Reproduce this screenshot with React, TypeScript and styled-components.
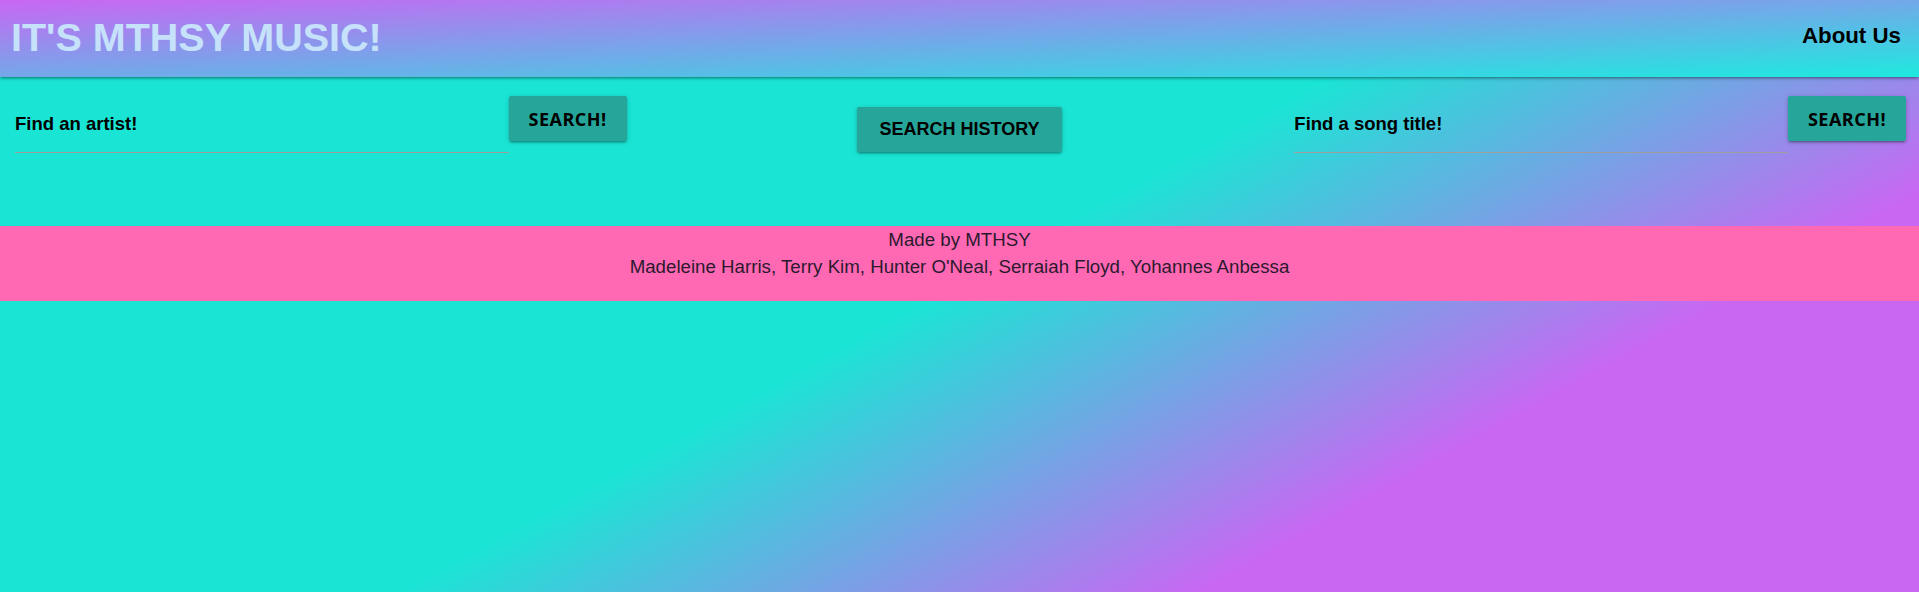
import * as React from 'react';
import styled, { createGlobalStyle } from 'styled-components';

const colors = {
    teal: '#1ae5d5',
    purple: '#c967f3',
    button: '#26a69a',
    footer: '#ff69b4',
    title: '#c6e2fb',
};

const depth1 =
    '0 2px 2px 0 rgba(0,0,0,0.14), 0 3px 1px -2px rgba(0,0,0,0.12), 0 1px 5px 0 rgba(0,0,0,0.2)';

const GlobalStyle = createGlobalStyle`
    html, body {
        margin: 0;
        padding: 0;
    }
    body {
        font-family: "Liberation Sans", Arial, sans-serif;
    }
    * {
        box-sizing: border-box;
    }
`;

const Page = styled.div`
    min-height: 100vh;
    background: linear-gradient(151deg, ${colors.teal} 49%, ${colors.purple} 76%);
`;

const Nav = styled.nav`
    position: relative;
    z-index: 1;
    height: 77px;
    display: flex;
    align-items: center;
    justify-content: space-between;
    padding: 0 18px 0 11px;
    background: linear-gradient(to bottom right, ${colors.purple}, #1ee9df);
    box-shadow: ${depth1};
`;

const Brand = styled.a`
    font-size: 39.5px;
    font-weight: bold;
    color: ${colors.title};
    text-decoration: none;
    margin-bottom: 3px;
`;

const NavLink = styled.a`
    font-size: 22.3px;
    font-weight: bold;
    color: #000;
    text-decoration: none;
    margin-bottom: 6px;
`;

const SearchRow = styled.main`
    display: grid;
    grid-template-columns: 1fr 1fr 1fr;
    height: 149px;
`;

const SearchCol = styled.div<{ $center?: boolean }>`
    display: flex;
    align-items: flex-start;
    justify-content: ${p => (p.$center ? 'center' : 'flex-start')};
    padding: ${p => (p.$center ? '30px 0 0' : '19px 13px 0 15px')};
`;

const SearchInput = styled.input`
    flex: 1;
    min-width: 0;
    height: 57px;
    padding: 0;
    border: 0;
    border-bottom: 1px solid #9e9e9e;
    background: transparent;
    outline: none;
    font-family: "Liberation Sans", Arial, sans-serif;
    font-size: 18.5px;
    font-weight: bold;
    color: #000;

    &::placeholder {
        color: #000;
        opacity: 1;
    }
`;

const Button = styled.button<{ $wide?: boolean }>`
    flex: 0 0 auto;
    width: ${p => (p.$wide ? '205px' : '118px')};
    height: 45px;
    border: 0;
    border-radius: 2px;
    background-color: ${colors.button};
    box-shadow: ${depth1};
    color: #000;
    font-family: ${p => (p.$wide ? '"Liberation Sans", Arial, sans-serif' : '"Open Sans", sans-serif')};
    font-size: 18px;
    font-weight: bold;
    letter-spacing: ${p => (p.$wide ? '0' : '0.5px')};
    text-transform: uppercase;
    cursor: pointer;
    padding: 0;
`;

const Footer = styled.footer`
    background-color: ${colors.footer};
    padding: 0 0 21px;
    text-align: center;
    font-size: 18.7px;
    line-height: 27px;
    color: #2b1a2e;
`;

const FooterLine = styled.div``;

export default function App() {
    return (
        <>
            <GlobalStyle />
            <Page>
                <Nav>
                    <Brand href="#">IT'S MTHSY MUSIC!</Brand>
                    <NavLink href="#">About Us</NavLink>
                </Nav>
                <SearchRow>
                    <SearchCol>
                        <SearchInput placeholder="Find an artist!" />
                        <Button>Search!</Button>
                    </SearchCol>
                    <SearchCol $center>
                        <Button $wide>Search History</Button>
                    </SearchCol>
                    <SearchCol>
                        <SearchInput placeholder="Find a song title!" />
                        <Button>Search!</Button>
                    </SearchCol>
                </SearchRow>
                <Footer>
                    <FooterLine>Made by MTHSY</FooterLine>
                    <FooterLine>Madeleine Harris, Terry Kim, Hunter O'Neal, Serraiah Floyd, Yohannes Anbessa</FooterLine>
                </Footer>
            </Page>
        </>
    );
}
